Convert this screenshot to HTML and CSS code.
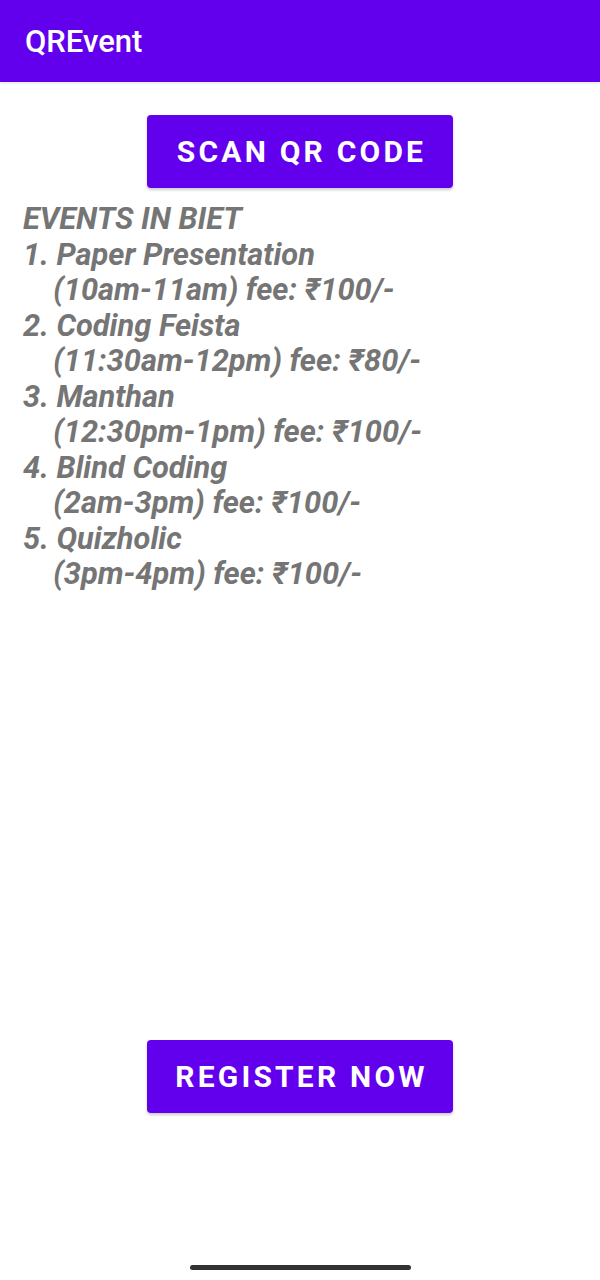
FILE: index.html
```html
<!DOCTYPE html>
<html>
<head>
<meta charset="utf-8">
<link rel="stylesheet" href="styles.css">
</head>
<body>
<div class="screen">
  <header class="appbar"><span class="title">QREvent</span></header>
  <main class="content">
    <button class="btn scan">SCAN QR CODE</button>
    <div class="events">EVENTS IN BIET
1. Paper Presentation
    (10am-11am) fee: ₹100/-
2. Coding Feista
    (11:30am-12pm) fee: ₹80/-
3. Manthan
    (12:30pm-1pm) fee: ₹100/-
4. Blind Coding
    (2am-3pm) fee: ₹100/-
5. Quizholic
    (3pm-4pm) fee: ₹100/-</div>
    <div class="spacer"></div>
    <button class="btn register">REGISTER NOW</button>
  </main>
  <footer class="navarea"><div class="homebar"></div></footer>
</div>
</body>
</html>
```
FILE: styles.css
```css
* { box-sizing: border-box; }
html, body { margin: 0; padding: 0; background: #ffffff; }
body { font-family: Roboto, "Noto Sans", "Liberation Sans", sans-serif; }
.screen { height: 1280px; display: flex; flex-direction: column; }
.appbar {
  height: 82px;
  background: #6200ee;
  display: flex;
  align-items: center;
  padding-left: 25px;
  box-shadow: 0 1px 3px rgba(0,0,0,0.12);
}
.title { color: #ffffff; font-size: 31px; font-weight: 500; padding-top: 1px; }
.content { flex: 1; display: flex; flex-direction: column; align-items: center; }
.btn {
  width: 306px;
  height: 73px;
  background: #6200ee;
  color: #ffffff;
  border: none;
  border-radius: 4px;
  font-family: Roboto, "Noto Sans", sans-serif;
  font-weight: 700;
  font-size: 30px;
  letter-spacing: 3.2px;
  box-shadow: 0 2px 3px rgba(0,0,0,0.2);
  padding: 0 0 0 3px;
}
.scan { margin-top: 33px; }
.events {
  align-self: flex-start;
  margin-left: 23px;
  margin-top: 13px;
  white-space: pre;
  font-size: 30.8px;
  line-height: 35.5px;
  font-weight: 700;
  font-style: italic;
  color: #757575;
}
.spacer { flex: 1; }
.navarea { height: 167px; display: flex; align-items: flex-end; justify-content: center; padding-bottom: 10px; }
.homebar { width: 221px; height: 5px; border-radius: 3px; background: #333333; }
```
